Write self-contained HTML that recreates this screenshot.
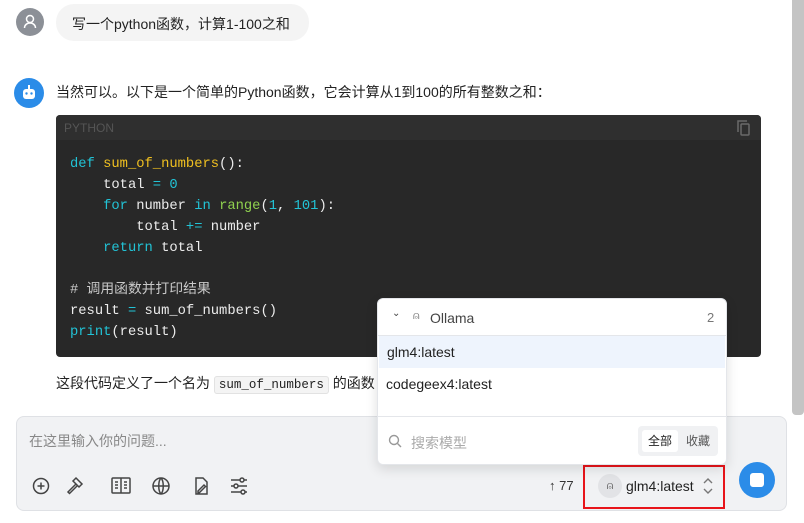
<!DOCTYPE html>
<html><head><meta charset="utf-8"><style>
*{margin:0;padding:0;box-sizing:border-box}
body{width:804px;height:523px;overflow:hidden;background:#fff;font-family:"Liberation Sans","Noto Sans CJK SC",sans-serif;color:#222;position:relative;font-size:14px}
.abs{position:absolute}
.code{font-family:"Liberation Mono","DejaVu Sans Mono",monospace;font-size:13.8px;color:#ececec;white-space:pre;line-height:21px}
.k{color:#22c3d6}.f{color:#f0c020}.n{color:#22c3d6}.b{color:#8fd14f}.c{color:#c8c8c8}
</style></head><body>
<div class="abs" style="left:792px;top:0;width:12px;height:415px;background:#c4c4c4;border-radius:0 0 4px 4px"></div>
<div class="abs" style="left:16px;top:8px;width:28px;height:28px;border-radius:50%;background:#8c9097">
<svg width="28" height="28" viewBox="0 0 28 28"><circle cx="14" cy="11" r="3.5" fill="none" stroke="#fff" stroke-width="1.5"/><path d="M8.5 20c0-3 2.5-5 5.5-5s5.5 2 5.5 5" fill="none" stroke="#fff" stroke-width="1.5"/></svg></div>
<div class="abs" style="left:56px;top:4px;width:253px;height:37px;border-radius:18px;background:#f4f4f4;padding:10px 0 0 16px;font-size:14px;color:#222">写一个python函数，计算1-100之和</div>
<div class="abs" style="left:14px;top:78px;width:30px;height:30px;border-radius:50%;background:#2b8ce8">
<svg width="30" height="30" viewBox="0 0 30 30"><rect x="9" y="11" width="12" height="10" rx="3" fill="#fff"/><rect x="14" y="7" width="2" height="4" fill="#fff"/><circle cx="12.5" cy="15.5" r="1.2" fill="#2b8ce8"/><circle cx="17.5" cy="15.5" r="1.2" fill="#2b8ce8"/></svg></div>
<div class="abs" style="left:56px;top:82px;font-size:14px">当然可以。以下是一个简单的Python函数，它会计算从1到100的所有整数之和：</div>
<div class="abs" style="left:56px;top:115px;width:705px;height:242px;background:#282828;border-radius:4px;overflow:hidden">
<div style="height:25px;background:#2f2f2f;padding:6px 0 0 8px;font-size:12px;color:#555;font-family:'Liberation Sans',sans-serif">PYTHON</div>
<svg class="abs" style="left:680px;top:4px" width="16" height="18" viewBox="0 0 16 18"><path d="M2 13V2h9" fill="none" stroke="#6a6a6a" stroke-width="1.5"/><rect x="5" y="5" width="8" height="11" rx="1" fill="none" stroke="#6a6a6a" stroke-width="1.5"/></svg>
<div class="code abs" style="left:14px;top:39px"><span class="k">def</span> <span class="f">sum_of_numbers</span>():
    total <span class="k">=</span> <span class="n">0</span>
    <span class="k">for</span> number <span class="k">in</span> <span class="b">range</span>(<span class="n">1</span>, <span class="n">101</span>):
        total <span class="k">+=</span> number
    <span class="k">return</span> total

<span class="c"># 调用函数并打印结果</span>
result <span class="k">=</span> sum_of_numbers()
<span class="k">print</span>(result)</div>
</div>
<div class="abs" style="left:56px;top:373px;font-size:14px">这段代码定义了一个名为 <span style="font-family:'Liberation Mono',monospace;font-size:12.5px;background:#f4f4f4;border:1px solid #e2e2e2;border-radius:3px;padding:1px 4px">sum_of_numbers</span> 的函数</div>
<div class="abs" style="left:16px;top:416px;width:771px;height:95px;background:#f1f2f4;border:1px solid #dfe1e5;border-radius:8px"></div>
<div class="abs" style="left:29px;top:431px;font-size:14px;color:#888">在这里输入你的问题...</div>
<svg class="abs" style="left:30px;top:475px" width="230" height="22" viewBox="0 0 230 22" fill="none" stroke="#444" stroke-width="1.5">
<circle cx="11" cy="11" r="7.5"/><path d="M11 7.5v7M7.5 11h7"/>
<path d="M46 3l6 6-3 3-6-6zM46 9l-8 8 1.5 1.5 8-8"/>
<rect x="82" y="3" width="18" height="15" rx="1"/><path d="M91 3v15M85 7h3M85 10h3M85 13h3M94 7h3M94 10h3M94 13h3"/>
<circle cx="131" cy="11" r="8"/><path d="M123 11h16M131 3c-3 3-3 13 0 16M131 3c3 3 3 13 0 16"/>
<path d="M166 3h7l4 4v12h-11zM168 16l6-6 1.5 1.5-6 6h-1.5z"/>
<path d="M201 5h16M201 11h16M201 17h16"/><circle cx="212" cy="5" r="2" fill="#f1f2f4"/><circle cx="206" cy="11" r="2" fill="#f1f2f4"/><circle cx="213" cy="17" r="2" fill="#f1f2f4"/>
</svg>
<div class="abs" style="left:549px;top:478px;font-size:13px;color:#333">↑ 77</div>
<div class="abs" style="left:583px;top:465px;width:142px;height:44px;border:2px solid #e8141a"></div>
<div class="abs" style="left:598px;top:474px;width:24px;height:24px;border-radius:50%;background:#e2e3e6;font-size:11px;text-align:center;line-height:24px;color:#555">⍝</div>
<div class="abs" style="left:626px;top:478px;font-size:14px;color:#222">glm4:latest</div>
<svg class="abs" style="left:702px;top:477px" width="12" height="18" viewBox="0 0 12 18" fill="none" stroke="#777" stroke-width="1.4"><path d="M2 6l4-4 4 4M2 12l4 4 4-4"/></svg>
<div class="abs" style="left:739px;top:462px;width:36px;height:36px;border-radius:50%;background:#2b8ce8"><div style="margin:11px;width:14px;height:14px;background:#fff;border-radius:3px"></div></div>
<div class="abs" style="left:377px;top:298px;width:350px;height:167px;background:#fff;border:1px solid #e4e6ea;border-radius:6px;box-shadow:0 4px 12px rgba(0,0,0,.12);overflow:hidden">
<div style="height:37px;border-bottom:1px solid #e4e6ea;position:relative;font-size:14px;color:#444">
<span class="abs" style="left:14px;top:9px;font-size:10px">⌄</span>
<span class="abs" style="left:35px;top:11px;font-size:11px;color:#666">⍝</span>
<span class="abs" style="left:52px;top:11px">Ollama</span>
<span class="abs" style="left:329px;top:11px;color:#777;font-size:13px">2</span></div>
<div style="height:32px;background:#eef4fd;margin:0 1px;padding:8px 0 0 8px;font-size:14px;color:#222">glm4:latest</div>
<div style="height:32px;padding:8px 0 0 8px;font-size:14px;color:#222">codegeex4:latest</div>
<div class="abs" style="left:0;top:117px;width:100%;border-top:1px solid #e4e6ea"></div>
<svg class="abs" style="left:10px;top:135px" width="14" height="14" viewBox="0 0 14 14" fill="none" stroke="#999" stroke-width="1.4"><circle cx="6" cy="6" r="4.5"/><path d="M9.5 9.5l3.5 3.5"/></svg>
<span class="abs" style="left:33px;top:134px;font-size:14px;color:#aaa">搜索模型</span>
<div class="abs" style="left:260px;top:127px;width:80px;height:30px;background:#f0f1f3;border-radius:4px">
<div class="abs" style="left:4px;top:4px;width:36px;height:22px;background:#fff;border-radius:3px;font-size:12px;text-align:center;line-height:22px;color:#222">全部</div>
<div class="abs" style="left:43px;top:4px;width:34px;height:22px;font-size:12px;text-align:center;line-height:22px;color:#555">收藏</div></div>
</div>
</body></html>
